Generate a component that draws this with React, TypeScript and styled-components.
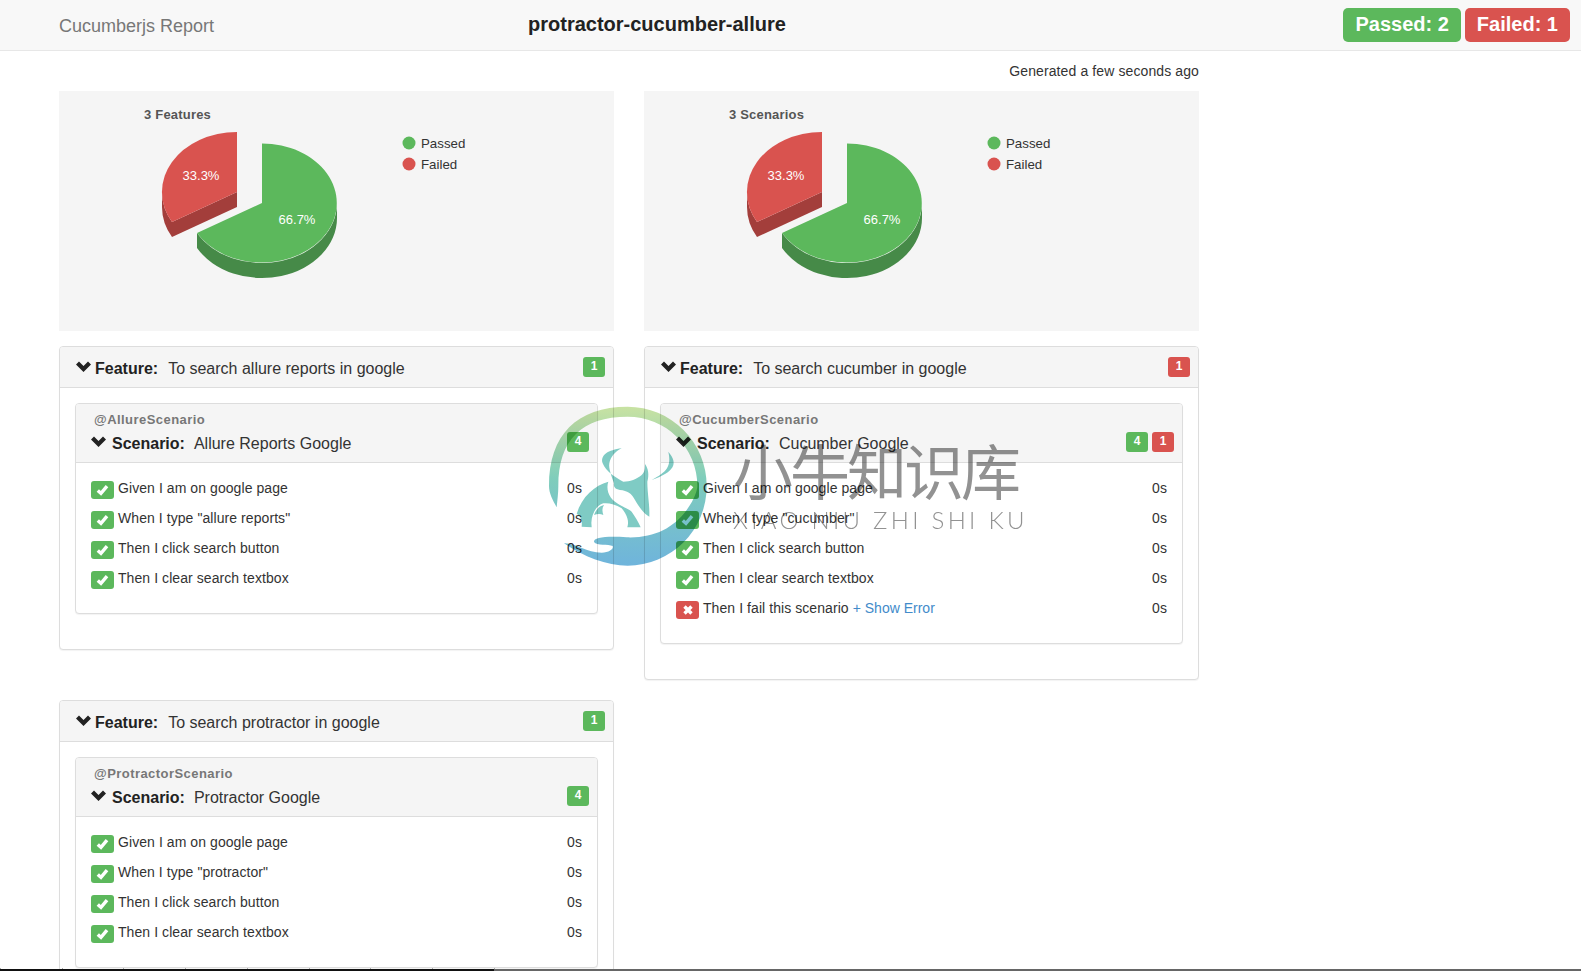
import React from 'react';
import styled, { createGlobalStyle } from 'styled-components';

interface IStep {
  text: string;
  failed?: boolean;
}

interface IFeature {
  title: string;
  tag: string;
  scenario: string;
  passed: number;
  failed: number;
  steps: IStep[];
}

const features: IFeature[] = [
  {
    title: 'To search allure reports in google',
    tag: '@AllureScenario',
    scenario: 'Allure Reports Google',
    passed: 1,
    failed: 0,
    steps: [
      { text: 'Given I am on google page' },
      { text: 'When I type "allure reports"' },
      { text: 'Then I click search button' },
      { text: 'Then I clear search textbox' },
    ],
  },
  {
    title: 'To search cucumber in google',
    tag: '@CucumberScenario',
    scenario: 'Cucumber Google',
    passed: 0,
    failed: 1,
    steps: [
      { text: 'Given I am on google page' },
      { text: 'When I type "cucumber"' },
      { text: 'Then I click search button' },
      { text: 'Then I clear search textbox' },
      { text: 'Then I fail this scenario', failed: true },
    ],
  },
  {
    title: 'To search protractor in google',
    tag: '@ProtractorScenario',
    scenario: 'Protractor Google',
    passed: 1,
    failed: 0,
    steps: [
      { text: 'Given I am on google page' },
      { text: 'When I type "protractor"' },
      { text: 'Then I click search button' },
      { text: 'Then I clear search textbox' },
    ],
  },
];

const Chevron = () => (
  <ChevronIcon viewBox="0 0 15 11">
    <polygon points="0,3.6 3,0.4 7.5,5 12,0.4 15,3.6 7.5,11" />
  </ChevronIcon>
);

const Pie = ({ title }: { title: string }) => (
  <svg width="555" height="240" viewBox="0 0 555 240">
    <PieTitle x="85" y="28">{title}</PieTitle>
    {/* red slice, pulled out of the pie */}
    <path d="M113,131 L178,101 L178,116 L113,146 Z" fill="#a33e3b" />
    <path d="M103,101 L103,116 A75,60 0 0 0 113,146 L113,131 A75,60 0 0 1 103,101 Z" fill="#a33e3b" />
    <path d="M178,101 L113,131 A75,60 0 0 1 178,41 Z" fill="#d9534f" />
    {/* green slice */}
    <path d="M138,142 L138,157 A75,60 0 0 0 278,127 L278,112 A75,60 0 0 1 138,142 Z" fill="#468a48" />
    <path d="M203,112 L203,52.5 A75,59.5 0 1 1 138,142 Z" fill="#5cb85c" />
    <PieLabel x="142" y="89">33.3%</PieLabel>
    <PieLabel x="238" y="132.5">66.7%</PieLabel>
    <circle cx="350" cy="52" r="6.5" fill="#5cb85c" />
    <LegendText x="362" y="56.5">Passed</LegendText>
    <circle cx="350" cy="73" r="6.5" fill="#d9534f" />
    <LegendText x="362" y="77.5">Failed</LegendText>
  </svg>
);

const Navigation = () => (
  <NavigationBar>
    <Brand>Cucumberjs Report</Brand>
    <ProjectName>protractor-cucumber-allure</ProjectName>
    <Totals>
      <TotalBadge $failed={false}>Passed: 2</TotalBadge>
      <TotalBadge $failed={true}>Failed: 1</TotalBadge>
    </Totals>
  </NavigationBar>
);

const FeatureCard = ({ feature }: { feature: IFeature }) => {
  const failedSteps = feature.steps.filter(s => s.failed).length;
  const passedSteps = feature.steps.length - failedSteps;

  return (
    <FeaturePanel>
      <FeatureHeading>
        <Chevron />
        <Keyword>Feature:</Keyword>
        <Title>{feature.title}</Title>
        <Counts>
          {feature.passed > 0 && <Count $failed={false}>{feature.passed}</Count>}
          {feature.failed > 0 && <Count $failed={true}>{feature.failed}</Count>}
        </Counts>
      </FeatureHeading>
      <FeatureBody>
        <ScenarioPanel>
          <ScenarioHeading>
            <Tag>{feature.tag}</Tag>
            <ScenarioTitle>
              <Chevron />
              <Keyword>Scenario:</Keyword>
              <Title>{feature.scenario}</Title>
              <Counts>
                <Count $failed={false}>{passedSteps}</Count>
                {failedSteps > 0 && <Count $failed={true}>{failedSteps}</Count>}
              </Counts>
            </ScenarioTitle>
          </ScenarioHeading>
          <Steps>
            {feature.steps.map(step => (
              <Step key={step.text}>
                <StepIcon $failed={!!step.failed}>
                  {step.failed ? (
                    <svg width="12" height="12" viewBox="0 0 12 12">
                      <path d="M2.5 2.5 L9.5 9.5 M9.5 2.5 L2.5 9.5" stroke="#fff" strokeWidth="3.4" fill="none" />
                    </svg>
                  ) : (
                    <svg width="13" height="12" viewBox="0 0 13 12">
                      <path d="M1.8 6.4 L5 9.4 L11 2.2" stroke="#fff" strokeWidth="3.4" fill="none" />
                    </svg>
                  )}
                </StepIcon>
                <StepText>{step.text}</StepText>
                {step.failed && <ShowError href="#">+ Show Error</ShowError>}
                <Duration>0s</Duration>
              </Step>
            ))}
          </Steps>
        </ScenarioPanel>
      </FeatureBody>
    </FeaturePanel>
  );
};

const Watermark = () => (
  <WatermarkBox>
    <svg width="175" height="175" viewBox="0 0 525 525">
      <defs>
        <linearGradient id="ring" x1="0" y1="0" x2="0" y2="1">
          <stop offset="0" stopColor="#c8e2a2" />
          <stop offset="0.45" stopColor="#7fcdbb" />
          <stop offset="1" stopColor="#6fb4dc" />
        </linearGradient>
      </defs>
      <path
        fill="url(#ring)"
        d="M50,322 C38,300 27,280 27,258 C27,105 110,20 263,20 A238,238 0 0 1 500,258 A238,238 0 0 1 263,497 C200,497 130,470 72,430 C105,428 140,458 185,458 C205,458 222,448 218,438 C205,432 170,438 162,426 C160,412 200,408 260,412 C340,415 400,385 440,330 C465,295 472,270 472,258 A209,208 0 0 0 263,50 C125,50 55,120 55,258 C55,280 52,300 50,322 Z"
      />
      <g fill="#7fcbc4">
        <path d="M245,145 C205,150 180,165 188,190 C198,215 225,232 250,245 C270,245 290,238 305,225 C315,215 315,205 315,192 C325,205 328,225 322,245 C322,280 330,320 328,350 C310,340 298,322 285,300 C275,280 262,272 240,270 C225,268 220,260 222,250 C215,230 205,205 208,190 C212,170 225,155 245,145 Z" />
        <path d="M335,240 C380,215 395,200 385,155 C415,190 405,215 335,240 Z" />
        <path d="M110,342 C125,290 165,255 205,245 C198,265 205,290 225,305 C245,320 265,325 275,335 C285,350 295,365 302,382 L262,382 C268,365 262,345 245,325 C225,312 205,308 190,310 C170,315 150,345 155,382 L125,380 C128,360 120,345 110,342 Z" />
        <path d="M162,345 C170,325 180,318 192,315 C185,325 187,335 190,345 C180,340 170,342 162,345 Z" />
      </g>
    </svg>
    <WatermarkText>
      <WatermarkName>小牛知识库</WatermarkName>
      <WatermarkLatin>XIAO NIU ZHI SHI KU</WatermarkLatin>
    </WatermarkText>
  </WatermarkBox>
);

const App = () => (
  <Page>
    <GlobalStyle />
    <Navigation />
    <Main>
      <Generated>Generated a few seconds ago</Generated>
      <ChartRow>
        <ChartPanel><Pie title="3 Features" /></ChartPanel>
        <ChartPanel><Pie title="3 Scenarios" /></ChartPanel>
      </ChartRow>
      <FeatureGrid>
        {features.map(f => <FeatureCard key={f.tag} feature={f} />)}
      </FeatureGrid>
    </Main>
    <Watermark />
    <BottomEdge />
  </Page>
);

const GlobalStyle = createGlobalStyle`
  html, body {
    margin: 0;
    padding: 0;
    background: #fff;
  }
  * {
    box-sizing: border-box;
  }
`;

const Page = styled.div`
  position: relative;
  height: 971px;
  overflow: hidden;
  background: #fff;
  font-family: "Liberation Sans", Arial, sans-serif;
  font-size: 14px;
  color: #333;
`;

const NavigationBar = styled.div`
  display: flex;
  align-items: center;
  height: 51px;
  padding-left: 59px;
  background: #f8f8f8;
  border-bottom: 1px solid #e7e7e7;
`;

const Brand = styled.span`
  width: 469px;
  padding-top: 2px;
  font-size: 18px;
  color: #777;
`;

const ProjectName = styled.span`
  font-size: 20px;
  font-weight: bold;
  color: #222;
  margin-top: -1px;
`;

const Totals = styled.div`
  display: flex;
  gap: 4px;
  margin-left: auto;
  margin-right: 11px;
  margin-top: -1px;
`;

const TotalBadge = styled.span<{ $failed: boolean }>`
  height: 34px;
  padding: 0 12px;
  line-height: 32px;
  font-size: 20px;
  font-weight: bold;
  color: #fff;
  border-radius: 5px;
  background: ${p => (p.$failed ? '#d9534f' : '#5cb85c')};
`;

const Main = styled.div`
  width: 1199px;
  padding-left: 59px;
`;

const Generated = styled.div`
  height: 40px;
  line-height: 40px;
  text-align: right;
  letter-spacing: 0.11px;
`;

const ChartRow = styled.div`
  display: grid;
  grid-template-columns: 555px 555px;
  column-gap: 30px;
  margin-bottom: 15px;
`;

const ChartPanel = styled.div`
  height: 240px;
  background: #f5f5f5;

  svg {
    display: block;
  }
`;

const PieTitle = styled.text`
  font-size: 13px;
  font-weight: bold;
  letter-spacing: 0.2px;
  fill: #555;
`;

const PieLabel = styled.text`
  font-size: 13px;
  fill: #fff;
  text-anchor: middle;
`;

const LegendText = styled.text`
  font-size: 13.3px;
  fill: #333;
`;

const FeatureGrid = styled.div`
  display: grid;
  grid-template-columns: 555px 555px;
  column-gap: 30px;
  align-items: start;
`;

const FeaturePanel = styled.div`
  margin-bottom: 20px;
  background: #fff;
  border: 1px solid #ddd;
  border-radius: 4px;
  box-shadow: 0 1px 1px rgba(0, 0, 0, 0.05);
`;

const FeatureHeading = styled.div`
  display: flex;
  align-items: center;
  height: 41px;
  padding: 4px 8px 0 16px;
  background: #f5f5f5;
  border-bottom: 1px solid #ddd;
  border-radius: 3px 3px 0 0;
`;

const ChevronIcon = styled.svg`
  flex: none;
  width: 15px;
  height: 11px;
  margin: -6px 4px 0 0;
  fill: #222;
`;

const Keyword = styled.span`
  font-size: 16px;
  font-weight: bold;
  color: #222;
`;

const Title = styled.span`
  margin-left: 10px;
  font-size: 16px;
  color: #333;
`;

const Counts = styled.span`
  display: flex;
  gap: 4px;
  margin-left: auto;
  margin-top: -4px;
`;

const Count = styled.span<{ $failed: boolean }>`
  width: 22px;
  height: 20px;
  line-height: 18px;
  text-align: center;
  font-size: 12px;
  font-weight: bold;
  color: #fff;
  border-radius: 3px;
  background: ${p => (p.$failed ? '#d9534f' : '#5cb85c')};
`;

const FeatureBody = styled.div`
  padding: 15px;
`;

const ScenarioPanel = styled.div`
  margin-bottom: 20px;
  background: #fff;
  border: 1px solid #ddd;
  border-radius: 4px;
  box-shadow: 0 1px 1px rgba(0, 0, 0, 0.05);
`;

const ScenarioHeading = styled.div`
  height: 59px;
  padding: 8px 8px 0 16px;
  background: #f5f5f5;
  border-bottom: 1px solid #ddd;
  border-radius: 3px 3px 0 0;
`;

const Tag = styled.div`
  padding-left: 2px;
  font-size: 13px;
  line-height: 16px;
  font-weight: bold;
  color: #777;
  letter-spacing: 0.45px;
`;

const ScenarioTitle = styled.div`
  display: flex;
  align-items: center;
  height: 24px;
  margin-top: 4px;

  ${ChevronIcon} {
    margin-left: -1px;
    margin-right: 6px;
  }

  ${Title} {
    margin-left: 9px;
  }

  ${Counts} {
    margin-top: -4px;
  }
`;

const Steps = styled.div`
  padding: 12px 15px 18px;
`;

const Step = styled.div`
  display: flex;
  align-items: flex-start;
  height: 30px;
  padding-top: 6px;
  line-height: 14px;
  letter-spacing: 0.07px;
`;

const StepIcon = styled.span<{ $failed: boolean }>`
  display: flex;
  align-items: center;
  justify-content: center;
  flex: none;
  width: 23px;
  height: 18px;
  margin-right: 4px;
  border-radius: 3px;
  background: ${p => (p.$failed ? '#d9534f' : '#5cb85c')};
`;

const StepText = styled.span`
  color: #333;
`;

const ShowError = styled.a`
  margin-left: 4px;
  color: #428bca;
  text-decoration: none;
  letter-spacing: 0;
`;

const Duration = styled.span`
  margin-left: auto;
`;

const WatermarkBox = styled.div`
  position: absolute;
  left: 540px;
  top: 400px;
  display: flex;
  pointer-events: none;
  mix-blend-mode: multiply;
`;

const WatermarkText = styled.div`
  position: absolute;
  left: 193px;
  top: 30px;
  white-space: nowrap;
`;

const WatermarkName = styled.div`
  font-family: "Noto Sans CJK SC", sans-serif;
  font-size: 60px;
  line-height: 78px;
  letter-spacing: -3px;
  color: #929292;
`;

const WatermarkLatin = styled.div`
  font-family: Lato, sans-serif;
  font-weight: 300;
  font-size: 24px;
  line-height: 24px;
  letter-spacing: 3.3px;
  color: #929292;
`;

const BottomEdge = styled.div`
  position: absolute;
  left: 0;
  right: 0;
  top: 969px;
  height: 2px;
  background: linear-gradient(to right, #111 0, #111 494px, #666 494px, #666 100%);

  &::before {
    content: "";
    position: absolute;
    left: 0;
    top: -1px;
    width: 495px;
    height: 1px;
    background: repeating-linear-gradient(to right, #aaa 0, #aaa 1px, transparent 1px, transparent 61.7px);
  }
`;

export default App;
